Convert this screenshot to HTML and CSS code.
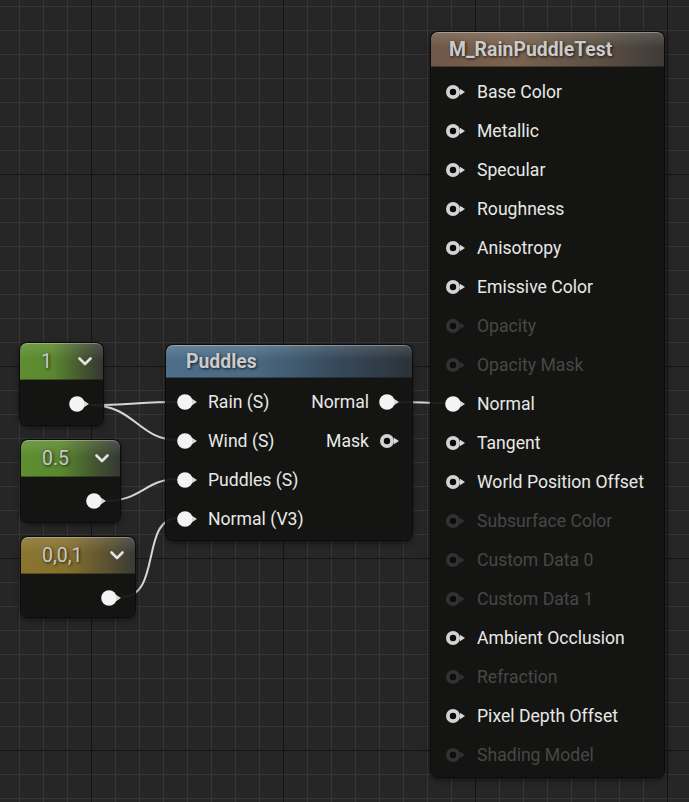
FILE: index.html
```html
<!DOCTYPE html>
<html>
<head>
<meta charset="utf-8">
<link rel="stylesheet" href="styles.css">
</head>
<body>
<div class="canvas">
  <svg class="wires" width="689" height="802" viewBox="0 0 689 802">
    <path d="M90 405 C 130 405, 140 402, 178 402"/>
    <path d="M90 405 C 135 405, 138 440, 178 440"/>
    <path d="M106 501 C 142 501, 145 479, 178 479"/>
    <path d="M122 597 C 162 597, 140 518, 178 518"/>
    <path d="M398 402 C 420 402, 425 403, 448 403"/>
  </svg>

  <!-- Constant 1 -->
  <div class="node const c1">
    <div class="chead green"><span class="cval">1</span><svg class="chev" width="14" height="9" viewBox="0 0 14 9"><polyline points="1.5,1.5 7,7 12.5,1.5"/></svg></div>
    <div class="cbody"><svg class="pin" width="22" height="18" viewBox="0 0 22 18"><circle class="fill" cx="8" cy="9" r="7.8"/><path class="arrow" d="M15 5.8 L20 9 L15 12.2Z"/></svg></div>
  </div>

  <!-- Constant 0.5 -->
  <div class="node const c05">
    <div class="chead green"><span class="cval">0.5</span><svg class="chev" width="14" height="9" viewBox="0 0 14 9"><polyline points="1.5,1.5 7,7 12.5,1.5"/></svg></div>
    <div class="cbody"><svg class="pin" width="22" height="18" viewBox="0 0 22 18"><circle class="fill" cx="8" cy="9" r="7.8"/><path class="arrow" d="M15 5.8 L20 9 L15 12.2Z"/></svg></div>
  </div>

  <!-- Constant 0,0,1 -->
  <div class="node const c001">
    <div class="chead gold"><span class="cval">0,0,1</span><svg class="chev" width="14" height="9" viewBox="0 0 14 9"><polyline points="1.5,1.5 7,7 12.5,1.5"/></svg></div>
    <div class="cbody"><svg class="pin" width="22" height="18" viewBox="0 0 22 18"><circle class="fill" cx="8" cy="9" r="7.8"/><path class="arrow" d="M15 5.8 L20 9 L15 12.2Z"/></svg></div>
  </div>

  <!-- Puddles function -->
  <div class="node puddles">
    <div class="head blue">Puddles</div>
    <div class="pbody">
      <div class="col inputs">
        <div class="prow"><svg class="pin" width="22" height="18" viewBox="0 0 22 18"><circle class="fill" cx="8" cy="9" r="7.8"/><path class="arrow" d="M15 5.8 L20 9 L15 12.2Z"/></svg><span>Rain (S)</span></div>
        <div class="prow"><svg class="pin" width="22" height="18" viewBox="0 0 22 18"><circle class="fill" cx="8" cy="9" r="7.8"/><path class="arrow" d="M15 5.8 L20 9 L15 12.2Z"/></svg><span>Wind (S)</span></div>
        <div class="prow"><svg class="pin" width="22" height="18" viewBox="0 0 22 18"><circle class="fill" cx="8" cy="9" r="7.8"/><path class="arrow" d="M15 5.8 L20 9 L15 12.2Z"/></svg><span>Puddles (S)</span></div>
        <div class="prow"><svg class="pin" width="22" height="18" viewBox="0 0 22 18"><circle class="fill" cx="8" cy="9" r="7.8"/><path class="arrow" d="M15 5.8 L20 9 L15 12.2Z"/></svg><span>Normal (V3)</span></div>
      </div>
      <div class="col outputs">
        <div class="prow out"><span>Normal</span><svg class="pin" width="22" height="18" viewBox="0 0 22 18"><circle class="fill" cx="8" cy="9" r="7.8"/><path class="arrow" d="M15 5.8 L20 9 L15 12.2Z"/></svg></div>
        <div class="prow out"><span>Mask</span><svg class="pin" width="22" height="18" viewBox="0 0 22 18"><circle class="ring" cx="8" cy="9" r="5.1"/><path class="arrow" d="M15 5.8 L20 9 L15 12.2Z"/></svg></div>
      </div>
    </div>
  </div>

  <!-- Material result node -->
  <div class="node main">
    <div class="head brown">M_RainPuddleTest</div>
    <div class="mbody">
      <div class="mrow"><svg class="pin" width="22" height="18" viewBox="0 0 22 18"><circle class="ring" cx="8" cy="9" r="5.1"/><path class="arrow" d="M15 5.8 L20 9 L15 12.2Z"/></svg><span>Base Color</span></div>
      <div class="mrow"><svg class="pin" width="22" height="18" viewBox="0 0 22 18"><circle class="ring" cx="8" cy="9" r="5.1"/><path class="arrow" d="M15 5.8 L20 9 L15 12.2Z"/></svg><span>Metallic</span></div>
      <div class="mrow"><svg class="pin" width="22" height="18" viewBox="0 0 22 18"><circle class="ring" cx="8" cy="9" r="5.1"/><path class="arrow" d="M15 5.8 L20 9 L15 12.2Z"/></svg><span>Specular</span></div>
      <div class="mrow"><svg class="pin" width="22" height="18" viewBox="0 0 22 18"><circle class="ring" cx="8" cy="9" r="5.1"/><path class="arrow" d="M15 5.8 L20 9 L15 12.2Z"/></svg><span>Roughness</span></div>
      <div class="mrow"><svg class="pin" width="22" height="18" viewBox="0 0 22 18"><circle class="ring" cx="8" cy="9" r="5.1"/><path class="arrow" d="M15 5.8 L20 9 L15 12.2Z"/></svg><span>Anisotropy</span></div>
      <div class="mrow"><svg class="pin" width="22" height="18" viewBox="0 0 22 18"><circle class="ring" cx="8" cy="9" r="5.1"/><path class="arrow" d="M15 5.8 L20 9 L15 12.2Z"/></svg><span>Emissive Color</span></div>
      <div class="mrow off"><svg class="pin" width="22" height="18" viewBox="0 0 22 18"><circle class="ring" cx="8" cy="9" r="5.1"/><path class="arrow" d="M15 5.8 L20 9 L15 12.2Z"/></svg><span>Opacity</span></div>
      <div class="mrow off"><svg class="pin" width="22" height="18" viewBox="0 0 22 18"><circle class="ring" cx="8" cy="9" r="5.1"/><path class="arrow" d="M15 5.8 L20 9 L15 12.2Z"/></svg><span>Opacity Mask</span></div>
      <div class="mrow"><svg class="pin" width="22" height="18" viewBox="0 0 22 18"><circle class="fill" cx="8" cy="9" r="7.8"/><path class="arrow" d="M15 5.8 L20 9 L15 12.2Z"/></svg><span>Normal</span></div>
      <div class="mrow"><svg class="pin" width="22" height="18" viewBox="0 0 22 18"><circle class="ring" cx="8" cy="9" r="5.1"/><path class="arrow" d="M15 5.8 L20 9 L15 12.2Z"/></svg><span>Tangent</span></div>
      <div class="mrow"><svg class="pin" width="22" height="18" viewBox="0 0 22 18"><circle class="ring" cx="8" cy="9" r="5.1"/><path class="arrow" d="M15 5.8 L20 9 L15 12.2Z"/></svg><span>World Position Offset</span></div>
      <div class="mrow off"><svg class="pin" width="22" height="18" viewBox="0 0 22 18"><circle class="ring" cx="8" cy="9" r="5.1"/><path class="arrow" d="M15 5.8 L20 9 L15 12.2Z"/></svg><span>Subsurface Color</span></div>
      <div class="mrow off"><svg class="pin" width="22" height="18" viewBox="0 0 22 18"><circle class="ring" cx="8" cy="9" r="5.1"/><path class="arrow" d="M15 5.8 L20 9 L15 12.2Z"/></svg><span>Custom Data 0</span></div>
      <div class="mrow off"><svg class="pin" width="22" height="18" viewBox="0 0 22 18"><circle class="ring" cx="8" cy="9" r="5.1"/><path class="arrow" d="M15 5.8 L20 9 L15 12.2Z"/></svg><span>Custom Data 1</span></div>
      <div class="mrow"><svg class="pin" width="22" height="18" viewBox="0 0 22 18"><circle class="ring" cx="8" cy="9" r="5.1"/><path class="arrow" d="M15 5.8 L20 9 L15 12.2Z"/></svg><span>Ambient Occlusion</span></div>
      <div class="mrow off"><svg class="pin" width="22" height="18" viewBox="0 0 22 18"><circle class="ring" cx="8" cy="9" r="5.1"/><path class="arrow" d="M15 5.8 L20 9 L15 12.2Z"/></svg><span>Refraction</span></div>
      <div class="mrow"><svg class="pin" width="22" height="18" viewBox="0 0 22 18"><circle class="ring" cx="8" cy="9" r="5.1"/><path class="arrow" d="M15 5.8 L20 9 L15 12.2Z"/></svg><span>Pixel Depth Offset</span></div>
      <div class="mrow off"><svg class="pin" width="22" height="18" viewBox="0 0 22 18"><circle class="ring" cx="8" cy="9" r="5.1"/><path class="arrow" d="M15 5.8 L20 9 L15 12.2Z"/></svg><span>Shading Model</span></div>
    </div>
  </div>
</div>
</body>
</html>
```

FILE: styles.css
```css
html, body {
  margin: 0;
  padding: 0;
  background: #262626;
}

.canvas {
  position: relative;
  width: 689px;
  height: 802px;
  overflow: hidden;
  background-color: #262626;
  background-image:
    linear-gradient(to right, #141414 1px, transparent 1px),
    linear-gradient(to bottom, #141414 1px, transparent 1px),
    linear-gradient(to right, #363636 1px, transparent 1px),
    linear-gradient(to bottom, #363636 1px, transparent 1px);
  background-size: 192px 192px, 192px 192px, 24px 24px, 24px 24px;
  background-position: 91px 174px, 91px 174px, 19px 6px, 19px 6px;
  font-family: Roboto, "Liberation Sans", sans-serif;
}

.wires {
  position: absolute;
  left: 0;
  top: 0;
}

.wires path {
  fill: none;
  stroke: #d6d6d6;
  stroke-width: 2;
}

/* generic node */
.node {
  position: absolute;
  box-sizing: border-box;
  background: rgba(19, 20, 17, 0.94);
  border-radius: 7px;
  box-shadow: 0 0 0 1px #0c0c0c, 0 2px 6px rgba(0, 0, 0, 0.65);
}

.head {
  box-sizing: border-box;
  border-radius: 7px 7px 0 0;
  font-weight: bold;
  color: #cbcbcb;
  text-shadow: 1px 1px 3px rgba(0, 0, 0, 0.75);
  box-shadow: inset 0 1px 0 rgba(255, 255, 255, 0.3), inset 0 -1px 0 rgba(0, 0, 0, 0.35);
}

.brown {
  background:
    linear-gradient(to bottom, rgba(255, 255, 255, 0.14), rgba(255, 255, 255, 0) 45%),
    linear-gradient(to right, #6e5746 0%, #7a6350 35%, #5e5145 70%, #3e3b38 100%);
}

.blue {
  background:
    linear-gradient(to bottom, rgba(255, 255, 255, 0.14), rgba(255, 255, 255, 0) 45%),
    linear-gradient(to right, #4d6e8a 0%, #4a6a84 35%, #36495a 70%, #2b3238 100%);
}

.green {
  background:
    linear-gradient(to bottom, rgba(255, 255, 255, 0.12), rgba(255, 255, 255, 0) 45%),
    linear-gradient(to right, #5e8e31 0%, #5a872e 40%, #44552f 75%, #353833 100%);
}

.gold {
  background:
    linear-gradient(to bottom, rgba(255, 255, 255, 0.12), rgba(255, 255, 255, 0) 45%),
    linear-gradient(to right, #8a7430 0%, #85702c 40%, #5c5230 75%, #3b3a35 100%);
}

/* pins */
.pin {
  display: block;
  flex: none;
}

.pin .fill {
  fill: #f4f4f4;
}

.pin .ring {
  fill: #0a0a0a;
  stroke: #d2d2d2;
  stroke-width: 3.8;
}

.pin .arrow {
  fill: #d8d8d8;
}

/* main material node */
.main {
  left: 431px;
  top: 32px;
  width: 233px;
  height: 745px;
}

.main .head {
  height: 35px;
  line-height: 35px;
  padding-left: 18px;
  font-size: 19.4px;
}

.mbody {
  padding-top: 5px;
}

.mrow {
  height: 39px;
  display: flex;
  align-items: center;
  font-size: 17.6px;
  color: #e8e8e8;
}

.mrow .pin {
  margin-left: 14px;
  margin-right: 10px;
}

.mrow.off {
  color: #474747;
}

.mrow.off .ring {
  stroke: #323232;
  fill: #0c0c0c;
}

.mrow.off .arrow {
  fill: #2e2e2e;
}

/* Puddles function node */
.puddles {
  left: 166px;
  top: 345px;
  width: 246px;
  height: 195px;
}

.puddles .head {
  height: 33px;
  line-height: 33px;
  padding-left: 20px;
  font-size: 19.4px;
}

.pbody {
  display: flex;
  justify-content: space-between;
  padding-top: 4px;
}

.col {
  display: flex;
  flex-direction: column;
}

.outputs {
  align-items: flex-end;
}

.prow {
  height: 39px;
  display: flex;
  align-items: center;
  font-size: 17.6px;
  color: #e8e8e8;
}

.inputs .pin {
  margin-left: 11px;
  margin-right: 9px;
}

.outputs .pin {
  margin-left: 10px;
  margin-right: 11px;
}

/* constant nodes */
.c1 {
  left: 20px;
  top: 343px;
  width: 83px;
  height: 82px;
}

.c05 {
  left: 21px;
  top: 440px;
  width: 99px;
  height: 82px;
}

.c001 {
  left: 21px;
  top: 537px;
  width: 114px;
  height: 80px;
}

.chead {
  height: 37px;
  box-sizing: border-box;
  display: flex;
  align-items: center;
  justify-content: space-between;
  padding: 0 11px 0 21px;
  border-radius: 7px 7px 0 0;
  box-shadow: inset 0 1px 0 rgba(255, 255, 255, 0.28), inset 0 -1px 0 rgba(0, 0, 0, 0.35);
}

.cval {
  font-size: 19.5px;
  color: #c8c8c8;
  text-shadow: 1px 1px 3px rgba(0, 0, 0, 0.75);
}

.chev {
  display: block;
}

.chev polyline {
  fill: none;
  stroke: #e2e2e2;
  stroke-width: 2.6;
  stroke-linecap: round;
  stroke-linejoin: round;
}

.cbody {
  display: flex;
  justify-content: flex-end;
  padding: 15px 12px 0 0;
}
```
